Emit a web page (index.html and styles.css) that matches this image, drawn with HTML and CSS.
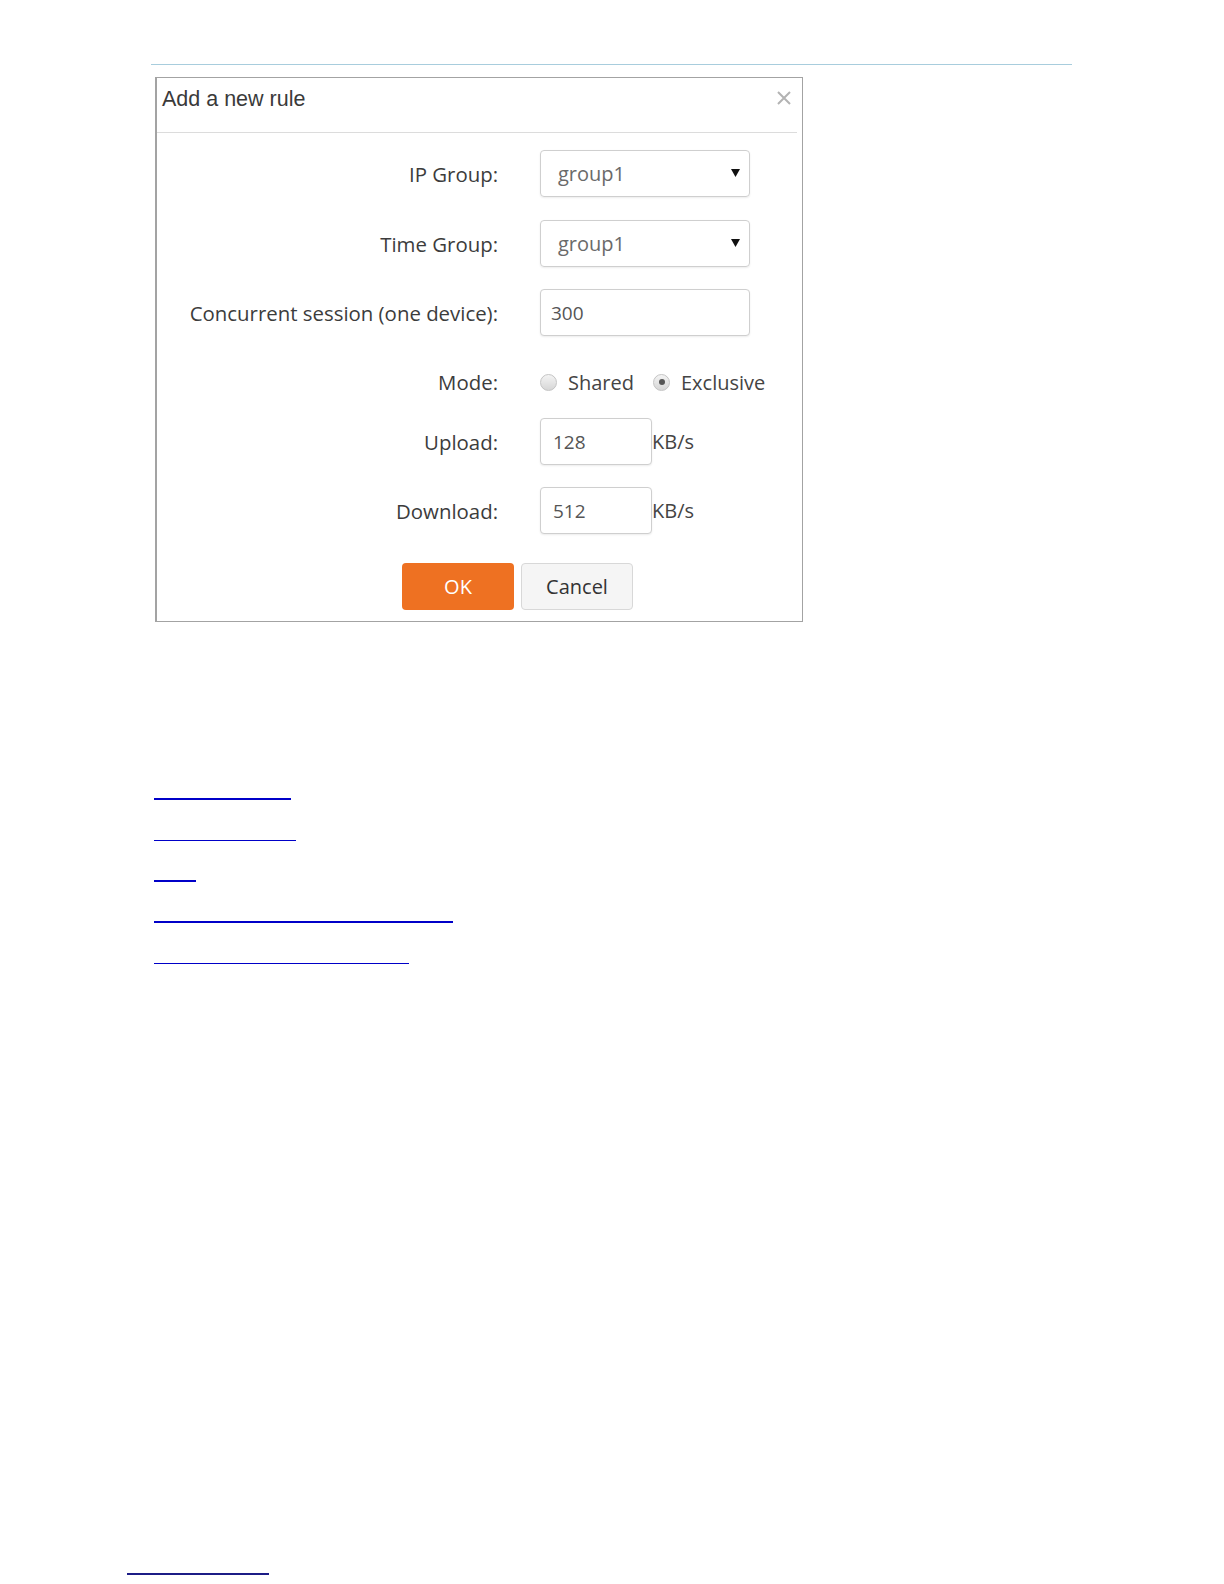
FILE: index.html
```html
<!DOCTYPE html>
<html lang="en">
<head>
    <meta charset="UTF-8" />
    <title>Add a new rule</title>
    <link rel="stylesheet" href="styles.css">
</head>
<body>

<div class="page">
  <div class="top-rule"></div>

  <div class="dialog">
    <div class="dialog-head">
      <span class="dialog-title">Add a new rule</span>
      <svg class="close" width="16" height="16" viewBox="0 0 16 16">
        <path d="M2 2 L14 14 M14 2 L2 14" stroke="#b3b3b3" stroke-width="2" fill="none"/>
      </svg>
    </div>

    <div class="dialog-body">
      <div class="row row-ip">
        <label class="field-label">IP Group:</label>
        <div class="select">
          <span>group1</span>
          <svg class="caret" width="9" height="8" viewBox="0 0 9 8"><path d="M0 0 H9 L4.5 8 Z" fill="#111"/></svg>
        </div>
      </div>

      <div class="row row-time">
        <label class="field-label">Time Group:</label>
        <div class="select">
          <span>group1</span>
          <svg class="caret" width="9" height="8" viewBox="0 0 9 8"><path d="M0 0 H9 L4.5 8 Z" fill="#111"/></svg>
        </div>
      </div>

      <div class="row row-session">
        <label class="field-label">Concurrent session (one device):</label>
        <input class="text-input wide" type="text" value="300">
      </div>

      <div class="row row-mode">
        <span class="field-label">Mode:</span>
        <label class="radio"><span class="dot"></span>Shared</label>
        <label class="radio checked"><span class="dot"></span>Exclusive</label>
      </div>

      <div class="row row-upload">
        <label class="field-label">Upload:</label>
        <input class="text-input short" type="text" value="128">
        <span class="unit">KB/s</span>
      </div>

      <div class="row row-download">
        <label class="field-label">Download:</label>
        <input class="text-input short" type="text" value="512">
        <span class="unit">KB/s</span>
      </div>

      <div class="actions">
        <button class="btn btn-ok">OK</button>
        <button class="btn btn-cancel">Cancel</button>
      </div>
    </div>
  </div>

  <div class="links">
    <a class="toc-link thick l1" href="#ip-group"></a>
    <a class="toc-link l2" href="#time-group"></a>
    <a class="toc-link thick l3" href="#mode"></a>
    <a class="toc-link thick l4" href="#bandwidth-control"></a>
    <a class="toc-link l5" href="#concurrent-session"></a>
  </div>

  <a class="foot-link" href="#top"></a>
</div>

</body>
</html>
```

FILE: styles.css
```css
body {
  margin: 0;
  background: #ffffff;
  font-family: "Open Sans", Lato, sans-serif;
  color: #333;
}
.page {
  padding-top: 64px;
  height: 1520px;
}
.top-rule {
  margin-left: 151px;
  width: 921px;
  height: 1px;
  background: #a8cddd;
}

/* dialog */
.dialog {
  margin: 12px 0 0 155px;
  width: 648px;
  border: 1px solid #a3a3a3;
  border-left-width: 2px;
  box-sizing: border-box;
  padding-bottom: 11px;
}
.dialog-head {
  display: flex;
  align-items: center;
  justify-content: space-between;
  height: 54px;
  margin-right: 5px;
  padding: 0 0 0 5px;
  border-bottom: 1px solid #dcdcdc;
}
.dialog-title {
  font-family: "Liberation Sans", Arial, sans-serif;
  font-size: 21.5px;
  color: #3a3a3a;
  margin-top: -12px;
}
.close {
  margin-top: -14px;
  margin-right: 5px;
}
.dialog-body {
  padding-top: 17px;
}
.row {
  display: flex;
  align-items: center;
  height: 47px;
  margin-bottom: 22px;
}
.row-ip { margin-bottom: 23px; }
.row-session { margin-bottom: 26px; }
.row-mode {
  height: 40px;
  margin-bottom: 16px;
}
.row-download { margin-bottom: 29px; }
.field-label {
  width: 341px;
  text-align: right;
  font-size: 20.4px;
  color: #3c3c3c;
  margin-right: 42px;
}

.select {
  width: 210px;
  height: 47px;
  box-sizing: border-box;
  border: 1px solid #cfcfcf;
  border-radius: 4px;
  box-shadow: 0 1px 2px rgba(0,0,0,0.08);
  display: flex;
  align-items: center;
  justify-content: space-between;
  padding: 0 9px 0 17px;
  font-size: 20px;
  color: #6a6a6a;
}
.caret { margin-top: -2px; }

.text-input {
  height: 47px;
  box-sizing: border-box;
  border: 1px solid #cfcfcf;
  border-radius: 4px;
  box-shadow: 0 1px 2px rgba(0,0,0,0.08);
  padding: 0 10px;
  font-family: "Open Sans", Lato, sans-serif;
  font-size: 19px;
  color: #555;
  background: #fff;
}
.text-input.wide { width: 210px; }
.text-input.short { width: 112px; padding-left: 12px; }
.unit {
  font-size: 20px;
  color: #444;
}

.radio {
  display: flex;
  align-items: center;
  font-size: 20px;
  color: #444;
  margin-right: 19px;
}
.radio .dot {
  width: 17px;
  height: 17px;
  border-radius: 50%;
  border: 1px solid #c4c4c4;
  background: linear-gradient(#f4f4f4, #d6d6d6);
  margin: 0 11px 0 0;
  position: relative;
  box-sizing: border-box;
}
.radio.checked .dot::after {
  content: "";
  position: absolute;
  left: 4.5px;
  top: 4.5px;
  width: 6px;
  height: 6px;
  border-radius: 50%;
  background: #555;
}

.actions {
  display: flex;
  gap: 7px;
  padding-left: 245px;
}
.btn {
  width: 112px;
  height: 47px;
  border-radius: 4px;
  font-family: "Open Sans", Lato, sans-serif;
  font-size: 20px;
  cursor: pointer;
}
.btn-ok {
  background: #ee7122;
  border: none;
  color: #fff;
}
.btn-cancel {
  background: #f5f5f5;
  border: 1px solid #d8d8d8;
  color: #333;
}

/* links below the figure */
.links {
  margin: 176px 0 0 154px;
  display: flex;
  flex-direction: column;
  align-items: flex-start;
  gap: 39px;
}
.toc-link {
  display: block;
  height: 1px;
  background: #0000c8;
}
.toc-link.thick { height: 2px; }
.l1 { width: 137px; }
.l2 { width: 142px; margin-top: 1px; }
.l3 { width: 42px; }
.l4 { width: 299px; }
.l5 { width: 255px; margin-top: 1px; }

.foot-link {
  display: block;
  margin: 609px 0 0 127px;
  width: 142px;
  height: 2px;
  background: #1c1c86;
}
```
